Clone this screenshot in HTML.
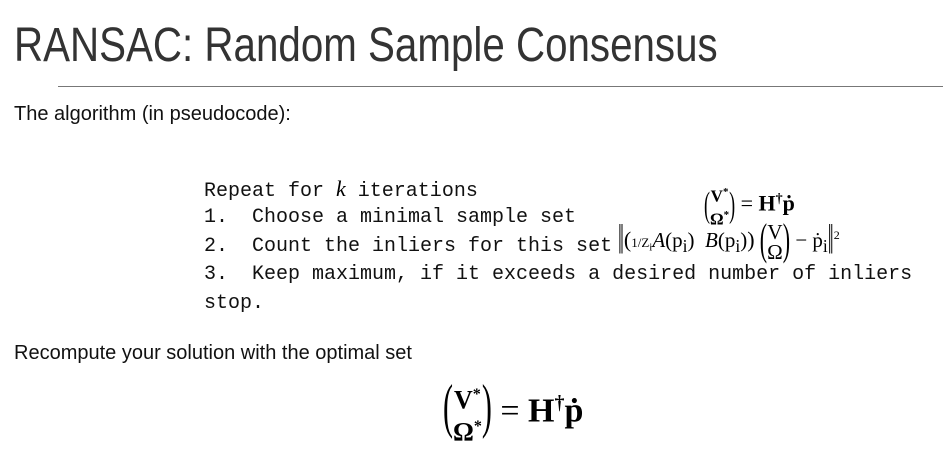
<!DOCTYPE html>
<html><head><meta charset="utf-8"><style>
body{margin:0;width:943px;height:453px;background:#fff;position:relative;overflow:hidden;font-family:"Liberation Sans",sans-serif;color:#222}
.a{position:absolute;white-space:pre}
.t{left:14px;top:18px;font-size:48px;color:#333;transform:scaleX(0.84);transform-origin:left top}
.b{font-size:20px;transform-origin:left top;color:#111}
.m{font-family:"Liberation Mono",monospace;font-size:20px;color:#111;left:204px}
.s{font-family:"Liberation Serif",serif;color:#000;white-space:nowrap}
.par{display:inline-block;transform:scaleY(2);font-weight:normal}
</style></head><body>
<div class="a t">RANSAC: Random Sample Consensus</div>
<div class="a" style="left:58px;top:86px;width:885px;height:1px;background:#777"></div>
<div class="a b" style="left:14px;top:103px">The algorithm (in pseudocode):</div>
<div class="a m" style="top:176px">Repeat for <i class="s" style="font-size:22px">k</i> iterations</div>
<div class="a m" style="top:206px">1.  Choose a minimal sample set</div>
<div class="a m" style="top:235px">2.  Count the inliers for this set</div>
<div class="a m" style="top:263px">3.  Keep maximum, if it exceeds a desired number of inliers</div>
<div class="a m" style="top:292px">stop.</div>
<div class="a s" style="left:618px;top:222px;font-size:21px"><span class="par" style="font-size:21px">‖</span><span style="font-size:22px">(</span><span style="font-size:13px">1/Z<sub>i</sub></span><i>A</i>(p<sub>i</sub>)&nbsp;&nbsp;<i>B</i>(p<sub>i</sub>)<span style="font-size:22px">)</span> <span class="par" style="font-size:22px">(</span><span style="display:inline-block;vertical-align:middle;line-height:20px;text-align:center">V<br>Ω</span><span class="par" style="font-size:22px">)</span> − ṗ<sub>i</sub><span class="par" style="font-size:21px">‖</span><sup style="font-size:12px">2</sup></div>
<div class="a s" style="left:704px;top:183px;font-size:22px;font-weight:bold"><span class="par" style="font-size:18px">(</span><span style="display:inline-block;vertical-align:middle;line-height:18px;font-size:17px;text-align:center">V<sup style="font-size:11px">*</sup><br>Ω<sup style="font-size:11px">*</sup></span><span class="par" style="font-size:18px">)</span> <span style="font-weight:normal">=</span> H<sup style="font-size:14px">†</sup>ṗ</div>
<div class="a b" style="left:14px;top:342px">Recompute your solution with the optimal set</div>
<div class="a s" style="left:443px;top:382px;font-size:34px;font-weight:bold"><span class="par" style="font-size:30px;vertical-align:4px">(</span><span style="display:inline-block;vertical-align:middle;line-height:26px;font-size:26px;text-align:center">V<sup style="font-size:16px">*</sup><br>Ω<sup style="font-size:16px">*</sup></span><span class="par" style="font-size:30px;vertical-align:4px">)</span> <span style="font-weight:normal">=</span> H<sup style="font-size:20px">†</sup>ṗ</div>
</body></html>
